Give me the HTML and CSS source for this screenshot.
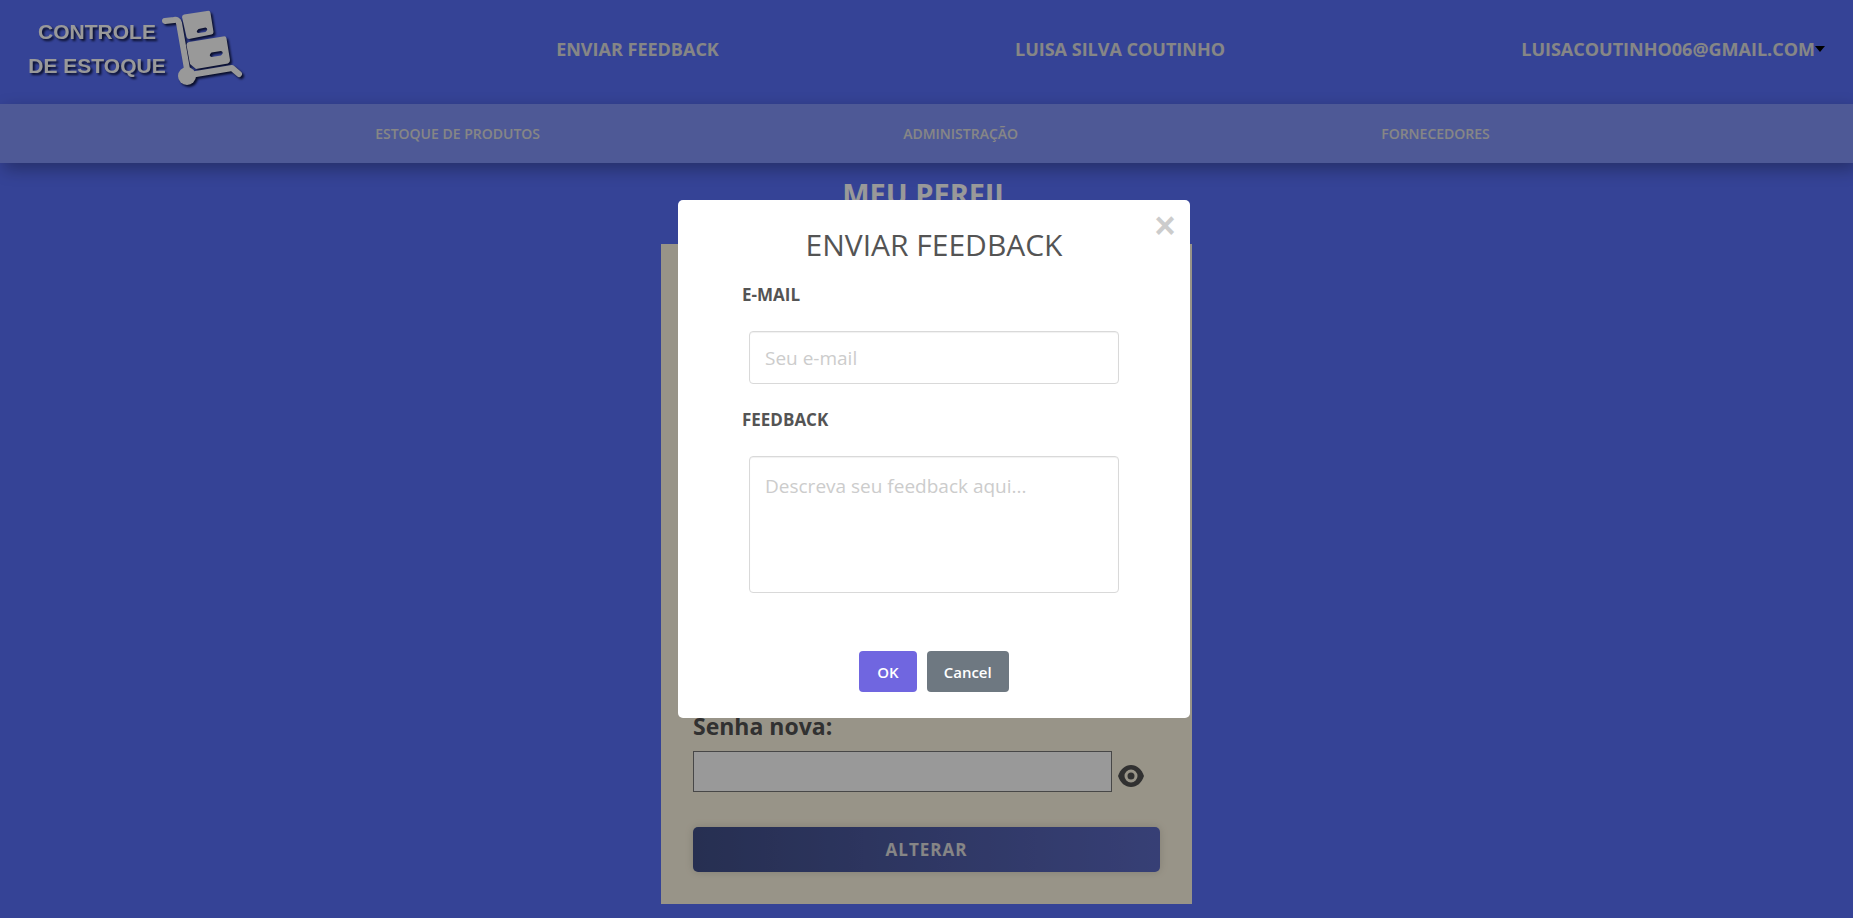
FILE: index.html
```html
<!DOCTYPE html>
<html lang="pt-BR">
<head>
<meta charset="utf-8">
<title>Controle de Estoque - Meu Perfil</title>
<link rel="stylesheet" href="styles.css">
</head>
<body>
<header class="topbar">
  <a class="logo" href="#" aria-label="Controle de Estoque">
    <span class="logo-text"><span>CONTROLE</span><span>DE ESTOQUE</span></span>
    <svg class="logo-cart" width="90" height="90" viewBox="0 0 90 90" aria-hidden="true">
      <g fill="none" stroke="#fff" stroke-width="6" stroke-linecap="round" stroke-linejoin="round">
        <path d="M5 17l9-1q4-1 5 3l8 46"/>
        <path d="M30 71l42-7 7 6"/>
      </g>
      <path fill="#fff" fill-rule="evenodd" d="M24 10.500L47 7q3-1 3.500 2l3 19q0 2-2 2.500L29 35q-2 0-2.500-2L22 13q0-2 2-2.500zM38.500 25q-3.500 3 0 4l7-1q3.500-3 0-4.500z"/>
      <path fill="#fff" fill-rule="evenodd" d="M29 38l34-5.500q3-1 3.500 2L70 56q0 3-2 3.500L36 65l-6-5-3.500-19q0-2.500 2.500-3zM51.500 48.500q-3.500 3 0 4.500l9.500-1.500q3.500-3 0-4.500z"/>
      <circle cx="27" cy="72" r="9" fill="#fff"/>
    </svg>
  </a>
  <a class="top-link" href="#">ENVIAR FEEDBACK</a>
  <a class="top-link" href="#">LUISA SILVA COUTINHO</a>
  <button class="top-link account" type="button">LUISACOUTINHO06@GMAIL.COM<span class="caret"></span></button>
</header>
<nav class="menu">
  <a href="#">ESTOQUE DE PRODUTOS</a>
  <a href="#">ADMINISTRAÇÃO</a>
  <a href="#">FORNECEDORES</a>
</nav>
<main class="profile">
  <h1>MEU PERFIL</h1>
  <form class="card">
    <label for="senha">Senha nova:</label>
    <div class="password">
      <input id="senha" type="password">
      <button class="eye" type="button" aria-label="Mostrar senha">
        <svg width="26" height="26" viewBox="0 0 26 26" aria-hidden="true">
          <path d="M13 2C7 2 2.500 6 0 13c2.500 7 7 11 13 11s10.500-4 13-11C23.500 6 19 2 13 2z" fill="#525252"/>
          <circle cx="13" cy="13" r="5" fill="#525252" stroke="#fef7e3" stroke-width="3"/>
        </svg>
      </button>
    </div>
    <button class="save" type="button">ALTERAR</button>
  </form>
</main>
<div class="overlay">
  <form class="modal" role="dialog" aria-modal="true" aria-labelledby="modal-title">
    <button class="close" type="button" aria-label="Fechar">×</button>
    <h2 id="modal-title">ENVIAR FEEDBACK</h2>
    <label for="email">E-MAIL</label>
    <input id="email" type="email" placeholder="Seu e-mail">
    <label for="feedback">FEEDBACK</label>
    <textarea id="feedback" placeholder="Descreva seu feedback aqui..."></textarea>
    <div class="actions">
      <button class="ok" type="button">OK</button>
      <button class="cancel" type="button">Cancel</button>
    </div>
  </form>
</div>
</body>
</html>
```
FILE: styles.css
```css
* {
  box-sizing: border-box;
}

body {
  margin: 0;
  min-height: 100vh;
  display: flex;
  flex-direction: column;
  background: #5970fa;
  font-family: "Segoe UI", "Open Sans", "Noto Sans", sans-serif;
}

button,
input,
textarea {
  font: inherit;
}

button {
  border: 0;
  cursor: pointer;
}

.topbar {
  display: flex;
  align-items: center;
  justify-content: space-between;
  height: 104px;
  padding: 0 28px 6px;
}

.logo {
  display: flex;
  align-items: center;
  width: 232px;
  color: #fff;
  text-decoration: none;
  filter: drop-shadow(2px 2px 1px #101848);
}

.logo-text {
  display: flex;
  flex-direction: column;
  align-items: center;
  width: 138px;
  font: 700 21px/34px "Liberation Sans", sans-serif;
  white-space: nowrap;
}

.logo-cart {
  flex: none;
  margin-left: -6px;
}

.top-link {
  padding: 0;
  background: none;
  color: #e0e0e0;
  font-size: 18px;
  font-weight: 700;
  text-decoration: none;
}

.account {
  display: flex;
  align-items: center;
}

.caret {
  border: 5px solid transparent;
  border-top: 6px solid #000;
  border-bottom: 0;
}

.menu {
  display: flex;
  align-items: center;
  justify-content: space-evenly;
  height: 59px;
  padding-left: 12px;
  background: #8294fa;
  box-shadow: 4px 6px 16px rgba(0, 0, 0, 0.3);
}

.menu a {
  color: #e0e0e0;
  font-size: 14px;
  font-weight: 600;
  text-decoration: none;
}

.profile {
  display: flex;
  flex: 1;
  flex-direction: column;
  align-items: center;
  padding-bottom: 14px;
}

.profile h1 {
  margin: 11px 0 30px;
  color: #fff;
  font-size: 29px;
  line-height: 40px;
}

.card {
  display: flex;
  flex: 1;
  flex-direction: column;
  justify-content: flex-end;
  width: 531px;
  padding: 32px;
  background: #fef7e3;
}

.card label {
  color: #525252;
  font-size: 23px;
  font-weight: 700;
  line-height: 32px;
}

.password {
  display: flex;
  align-items: center;
  gap: 6px;
  margin: 9px 0 35px;
}

.password input {
  width: 419px;
  height: 41px;
  border: 1px solid #777;
  background: #fff;
}

.eye {
  display: flex;
  padding: 9px 0 0;
  background: none;
}

.save {
  height: 45px;
  border-radius: 5px;
  background: linear-gradient(90deg, #414f88, #5c6ac4);
  box-shadow: 0 0 8px rgba(0, 0, 0, 0.15);
  color: #e0e0e0;
  font-size: 17px;
  font-weight: 700;
  letter-spacing: 1px;
}

.overlay {
  position: fixed;
  inset: 0;
  display: flex;
  align-items: center;
  justify-content: center;
  padding-left: 15px;
  background: rgba(0, 0, 0, 0.4);
}

.modal {
  position: relative;
  display: flex;
  flex-direction: column;
  width: 512px;
  padding: 25px 64px 26px;
  border-radius: 5px;
  background: #fff;
  color: #545454;
}

.close {
  position: absolute;
  top: 7px;
  right: 6px;
  width: 38px;
  height: 38px;
  padding: 0;
  background: none;
  color: #ccc;
  font: 700 36px/38px "Liberation Sans", sans-serif;
}

.modal h2 {
  margin: 0 0 16px;
  font-size: 30px;
  font-weight: 400;
  line-height: 40px;
  text-align: center;
}

.modal label {
  font-size: 17px;
  font-weight: 700;
  line-height: 28px;
}

.modal input,
.modal textarea {
  margin: 22px 7px;
  padding: 0 15px;
  border: 1px solid #d9d9d9;
  border-radius: 4px;
  box-shadow: inset 0 1px 1px rgba(0, 0, 0, 0.06);
  font-size: 19px;
}

.modal input {
  height: 53px;
}

.modal textarea {
  height: 137px;
  padding: 15px;
  line-height: 28px;
  resize: none;
}

.modal ::placeholder {
  color: #ccc;
}

.actions {
  display: flex;
  justify-content: center;
  gap: 10px;
  margin-top: 36px;
}

.actions button {
  height: 41px;
  padding: 0 17px;
  border-radius: 4px;
  color: #fff;
  font-size: 15px;
  font-weight: 600;
}

.actions .ok {
  padding: 0 18px;
  background: #7066e0;
}

.actions .cancel {
  background: #6e7881;
}
```
